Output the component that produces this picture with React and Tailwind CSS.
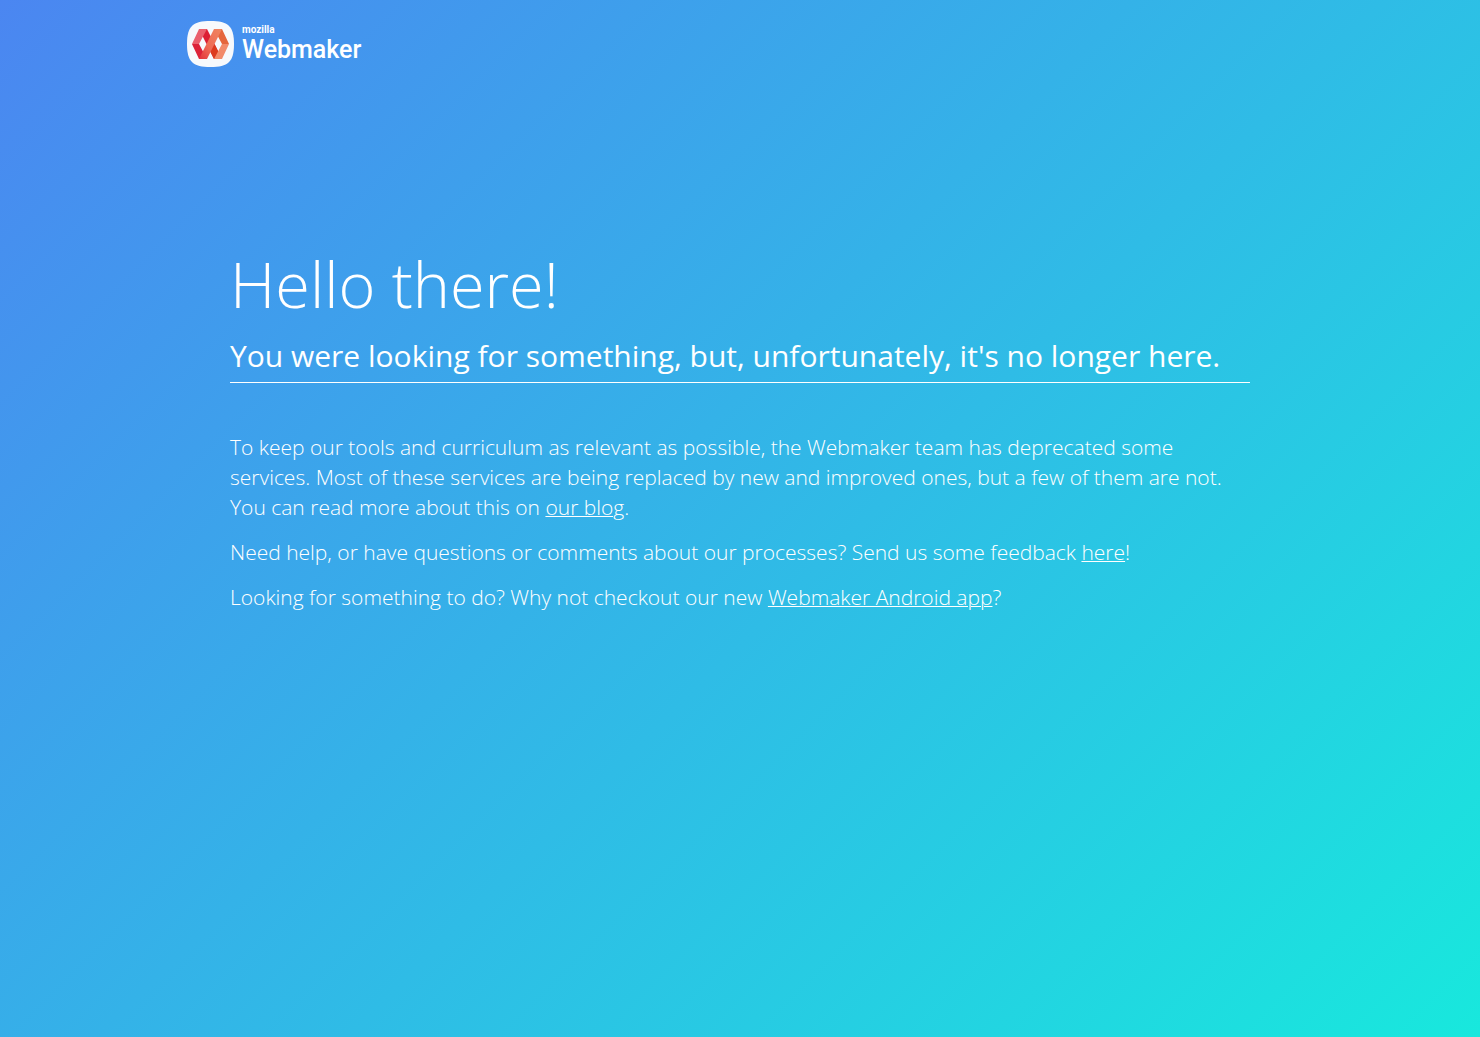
function Logo() {
  return (
    <a href="#" aria-label="Mozilla Webmaker" className="flex w-fit items-center gap-2">
      <svg viewBox="0 0 47 46" className="h-[46px] w-[47px]" aria-hidden="true">
        <defs>
          <linearGradient id="ribbon" x1="0" y1="1" x2="1" y2="0">
            <stop offset="0" stopColor="#e3303a" />
            <stop offset="0.4" stopColor="#ee6a55" />
            <stop offset="1" stopColor="#f08560" />
          </linearGradient>
        </defs>
        <path d="M23.500 0C41 0 47 5 47 23S41 46 23.500 46 0 41 0 23 6 0 23.500 0Z" fill="#f7f9fc" />
        {/* back ribbon */}
        <path d="M12 8h8l15 30h-8Z" fill="#dc1f34" />
        <path d="M27 38 23.500 31l4-8L35 38Z" fill="#dc3b1e" />
        {/* outer folds */}
        <path d="M12 8h8l-8 15H5Z" fill="#ea5f6c" />
        <path d="M5 23h7l8 15h-8Z" fill="#dc2238" />
        <path d="M27 8h8l7 15h-7Z" fill="#e5653c" />
        <path d="M42 23h-7l-8 15h8Z" fill="#f28a6a" />
        {/* front ribbon */}
        <path d="M12 38h8L35 8h-8Z" fill="url(#ribbon)" />
      </svg>
      <span className="flex flex-col font-[Roboto,sans-serif] text-white">
        <span className="text-[10px] leading-3 font-bold">mozilla</span>
        <span className="text-[25px] leading-7 font-medium">Webmaker</span>
      </span>
    </a>
  )
}

function TextLink({ children }) {
  return (
    <a href="#" className="underline decoration-1">
      {children}
    </a>
  )
}

export default function App() {
  return (
    <div className="min-h-screen bg-linear-[135deg,#4b86f1,#18e8dd] font-['Open_Sans',sans-serif] font-light text-white">
      <header className="mx-auto max-w-[1106px] pt-[21px]">
        <Logo />
      </header>
      <main className="mx-auto max-w-[1020px] pt-[175px]">
        <h1 className="text-[63px] leading-[84px]">Hello there!</h1>
        <h2 className="border-b border-white pt-2 pb-[5px] text-[30px] leading-[43px] font-normal">
          You were looking for something, but, unfortunately, it's no longer here.
        </h2>
        <div className="flex flex-col gap-[15px] pt-[49px] text-[21px] leading-[30px]">
          <p>
            To keep our tools and curriculum as relevant as possible, the Webmaker team has deprecated some
            services. Most of these services are being replaced by new and improved ones, but a few of them
            are not. You can read more about this on <TextLink>our blog</TextLink>.
          </p>
          <p>
            Need help, or have questions or comments about our processes? Send us some feedback{' '}
            <TextLink>here</TextLink>!
          </p>
          <p>
            Looking for something to do? Why not checkout our new <TextLink>Webmaker Android app</TextLink>?
          </p>
        </div>
      </main>
    </div>
  )
}
